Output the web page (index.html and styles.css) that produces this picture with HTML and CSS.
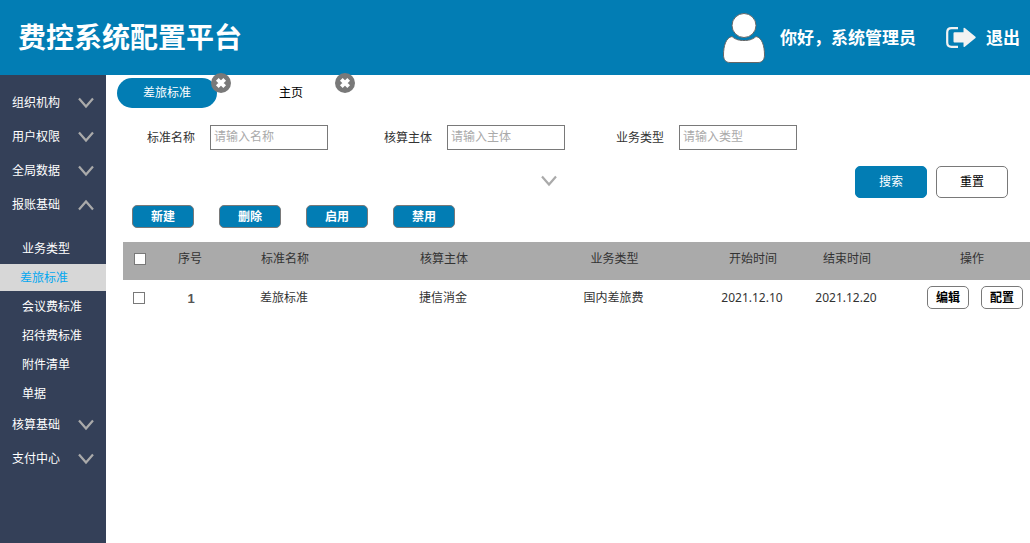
FILE: index.html
```html
<!DOCTYPE html>
<html lang="zh-CN">
<head>
<meta charset="utf-8">
<title>费控系统配置平台</title>
<link rel="stylesheet" href="styles.css">
</head>
<body>
<svg class="defs" aria-hidden="true">
  <symbol id="chevron" viewBox="0 0 16 12"><path d="M1 1.500 8 9.500 15 1.500" fill="none" stroke="#aaa" stroke-width="2.200"/></symbol>
  <symbol id="close" viewBox="0 0 20 20"><circle cx="10" cy="10" r="10" fill="#797979"/><path d="M6.300 6.300l7.400 7.400M13.700 6.300l-7.400 7.400" stroke="#fff" stroke-width="3.800"/></symbol>
</svg>
<header class="header">
  <h1 class="title">费控系统配置平台</h1>
  <div class="user">
    <svg class="avatar" viewBox="0 0 42 50" aria-hidden="true"><g fill="#fff" stroke="#666" stroke-width="1"><circle cx="21" cy="12.500" r="12"/><path d="M9 23.500C13 27 17 27.500 21 27.500S29 27 33 23.500C39 24.500 41.500 33 41.500 42C41.500 47 39 49.500 35 49.500H7C3 49.500 .5 47 .5 42C.5 33 3 24.500 9 23.500Z"/></g></svg>
    <span>你好，系统管理员</span>
  </div>
  <a class="logout" href="#">
    <svg class="logout-icon" viewBox="0 0 30 21" aria-hidden="true"><path d="M12 1.200H5.500Q1.200 1.200 1.200 5.500V15.500Q1.200 19.800 5.500 19.800H12" fill="none" stroke="#f2f2f2" stroke-width="2.200"/><path d="M8.500 5.200H17.500V1.500Q17.500 .2 18.800 1L29.500 9.800Q30 10.400 29.500 11L18.800 19.800Q17.500 20.600 17.500 19.300V15.600H8.500Q7.500 15.600 7.500 14.600V6.200Q7.500 5.200 8.500 5.200Z" fill="#f2f2f2"/></svg>
    <span>退出</span>
  </a>
</header>
<div class="layout">
  <nav class="sidebar">
    <button class="menu">组织机构<svg class="chevron"><use href="#chevron"/></svg></button>
    <button class="menu">用户权限<svg class="chevron"><use href="#chevron"/></svg></button>
    <button class="menu">全局数据<svg class="chevron"><use href="#chevron"/></svg></button>
    <button class="menu" aria-expanded="true">报账基础<svg class="chevron up"><use href="#chevron"/></svg></button>
    <div class="submenu">
      <a href="#">业务类型</a>
      <a class="active" href="#">差旅标准</a>
      <a href="#">会议费标准</a>
      <a href="#">招待费标准</a>
      <a href="#">附件清单</a>
      <a href="#">单据</a>
    </div>
    <button class="menu">核算基础<svg class="chevron"><use href="#chevron"/></svg></button>
    <button class="menu">支付中心<svg class="chevron"><use href="#chevron"/></svg></button>
  </nav>
  <main class="main">
    <div class="tabs">
      <div class="tab-wrap"><button class="tab current">差旅标准</button><button class="close" aria-label="关闭差旅标准"><svg><use href="#close"/></svg></button></div>
      <div class="tab-wrap"><button class="tab">主页</button><button class="close" aria-label="关闭主页"><svg><use href="#close"/></svg></button></div>
    </div>
    <form class="search">
      <div class="field"><label for="name">标准名称</label><input id="name" type="text" placeholder="请输入名称"></div>
      <div class="field"><label for="subject">核算主体</label><input id="subject" type="text" placeholder="请输入主体"></div>
      <div class="field"><label for="type">业务类型</label><input id="type" type="text" placeholder="请输入类型"></div>
    </form>
    <div class="search-actions">
      <button class="expand" aria-label="展开"><svg class="chevron"><use href="#chevron"/></svg></button>
      <button class="btn primary">搜索</button>
      <button class="btn">重置</button>
    </div>
    <div class="toolbar">
      <button>新建</button><button>删除</button><button>启用</button><button>禁用</button>
    </div>
    <table class="grid">
      <colgroup><col class="c-check"><col class="c-no"><col class="c-name"><col class="c-subject"><col class="c-type"><col class="c-date"><col class="c-date"><col class="c-ops"></colgroup>
      <thead>
        <tr><th><input type="checkbox" aria-label="全选"></th><th>序号</th><th>标准名称</th><th class="subject">核算主体</th><th>业务类型</th><th>开始时间</th><th>结束时间</th><th class="ops">操作</th></tr>
      </thead>
      <tbody>
        <tr><td><input type="checkbox" aria-label="选择第1行"></td><td class="no">1</td><td>差旅标准</td><td class="subject">捷信消金</td><td>国内差旅费</td><td>2021.12.10</td><td>2021.12.20</td><td class="ops"><div class="row-ops"><button>编辑</button><button>配置</button></div></td></tr>
      </tbody>
    </table>
  </main>
</div>
</body>
</html>
```
FILE: styles.css
```css
* { box-sizing: border-box; }
body {
  margin: 0;
  min-height: 100vh;
  display: flex;
  flex-direction: column;
  background: #fff;
  color: #333;
  font: 12px/18px "Noto Sans", "Noto Sans CJK SC", sans-serif;
}
button, input { font: inherit; color: inherit; }
button { padding: 0; border: 0; background: none; cursor: pointer; }
a { color: inherit; text-decoration: none; }
.defs { position: absolute; width: 0; height: 0; }

.header {
  display: flex;
  align-items: center;
  min-height: 75px;
  padding: 0 10px 0 18px;
  background: #027db4;
  color: #fff;
  font-size: 17px;
  font-weight: 700;
  line-height: 24px;
}
.title { margin: 0 auto 0 0; padding-bottom: 2px; font-size: 28px; line-height: 40px; }
.user { display: flex; align-items: center; gap: 15px; margin-right: 30px; }
.avatar { width: 42px; height: 50px; }
.logout { display: flex; align-items: center; gap: 10px; }
.logout-icon { width: 30px; height: 21px; }

.layout { display: flex; flex: 1; }
.sidebar { flex: 0 0 106px; padding-top: 11px; background: #344058; color: #fff; }
.menu {
  display: flex;
  align-items: center;
  justify-content: space-between;
  width: 100%;
  height: 34px;
  padding: 0 12px;
}
.chevron { display: block; width: 16px; height: 12px; }
.up { transform: rotate(180deg); }
.submenu { padding-top: 12px; }
.submenu a { display: block; padding-left: 22px; line-height: 29px; }
.submenu .active {
  margin: 1px 0;
  padding-left: 20px;
  background: #d7d7d7;
  color: #02a7f0;
  line-height: 27px;
}

.main { flex: 1; min-width: 0; }
.tabs { display: flex; gap: 24px; padding: 3px 11px 0; }
.tab-wrap { position: relative; }
.tab { width: 100px; height: 30px; border-radius: 15px; color: #000; }
.tab.current { background: #027db4; color: #fff; }
.close { position: absolute; top: -5px; right: -14px; width: 20px; height: 20px; }
.close svg { display: block; width: 20px; height: 20px; }

.search { display: grid; grid-template-columns: 237px 232px auto; padding: 17px 0 0 41px; }
.field { display: flex; align-items: center; gap: 15px; }
.field input {
  width: 118px;
  height: 25px;
  padding: 0 3px 2px;
  border: 1px solid #797979;
  background: #fff;
}
.field input::placeholder { color: #aaa; opacity: 1; }

.search-actions { display: flex; align-items: center; gap: 9px; padding: 16px 22px 0 146px; }
.expand { display: flex; flex: 1; justify-content: center; padding-bottom: 2px; }
.btn { width: 72px; height: 32px; border: 1px solid #797979; border-radius: 5px; color: #000; }
.primary { border-color: #027db4; background: #027db4; color: #fff; }

.toolbar { display: flex; gap: 25px; padding: 7px 26px 14px; }
.toolbar button {
  width: 62px;
  height: 23px;
  border: 1px solid #797979;
  border-radius: 5px;
  background: #027db4;
  color: #fff;
  font-weight: 700;
}

.grid { width: calc(100% - 17px); margin-left: 17px; border-collapse: collapse; table-layout: fixed; }
.c-check { width: 34px; }
.c-no { width: 66px; }
.c-name { width: 124px; }
.c-subject { width: 176px; }
.c-type { width: 183px; }
.c-date { width: 94px; }
.c-ops { width: 136px; }
.grid th { height: 38px; padding: 0 0 4px; background: #aaa; font-weight: 400; text-align: center; }
.grid td { height: 35px; padding: 0 2px 0 0; text-align: center; }
.grid .subject { padding-left: 18px; }
.grid th.ops { padding-left: 20px; }
.grid td.ops { padding: 0 0 0 26px; }
.grid .no { padding: 2px 0 0 2px; color: #555; font-family: "Liberation Sans", sans-serif; font-size: 13px; font-weight: 700; }
.grid input {
  display: block;
  width: 12px;
  height: 12px;
  margin: 0 auto;
  appearance: none;
  border: 1px solid #797979;
  background: #fff;
}
.grid input:checked { background: #027db4; }
.row-ops { display: flex; justify-content: center; gap: 12px; }
.row-ops button {
  width: 42px;
  height: 23px;
  border: 1px solid #797979;
  border-radius: 5px;
  color: #000;
  font-weight: 700;
}
```
